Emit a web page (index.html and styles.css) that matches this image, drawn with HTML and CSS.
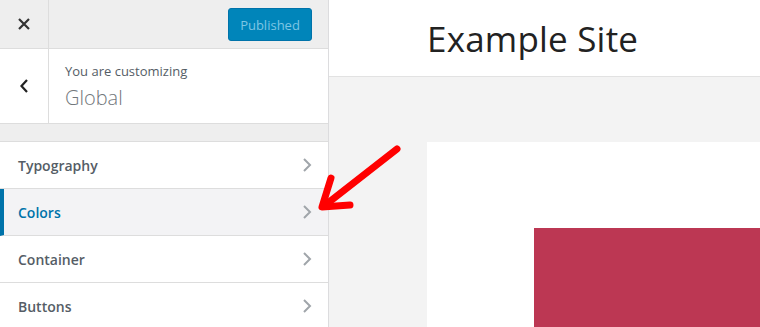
FILE: index.html
```html
<!DOCTYPE html>
<html>
<head>
<meta charset="utf-8">
<link rel="stylesheet" href="styles.css">
</head>
<body>
<div class="app">
  <aside class="sidebar">
    <div class="topbar">
      <div class="close">
        <svg width="14" height="14" viewBox="0 0 14 14"><path d="M2 2 L12 12 M12 2 L2 12" stroke="#333" stroke-width="2.2" fill="none"/></svg>
      </div>
      <div class="topbar-right">
        <button class="publish">Published</button>
      </div>
    </div>
    <div class="info">
      <div class="back">
        <svg width="10" height="16" viewBox="0 0 10 16"><path d="M8 2 L2.5 8 L8 14" stroke="#222" stroke-width="2.2" fill="none"/></svg>
      </div>
      <div class="info-text">
        <div class="info-small">You are customizing</div>
        <div class="info-title">Global</div>
      </div>
    </div>
    <div class="gap"></div>
    <ul class="menu">
      <li class="item"><span>Typography</span><svg class="chev" width="10" height="16" viewBox="0 0 10 16"><path d="M2 2 L8 8 L2 14" stroke="#a0a5aa" stroke-width="2" fill="none"/></svg></li>
      <li class="item active"><span>Colors</span><svg class="chev" width="10" height="16" viewBox="0 0 10 16"><path d="M2 2 L8 8 L2 14" stroke="#a0a5aa" stroke-width="2" fill="none"/></svg></li>
      <li class="item"><span>Container</span><svg class="chev" width="10" height="16" viewBox="0 0 10 16"><path d="M2 2 L8 8 L2 14" stroke="#a0a5aa" stroke-width="2" fill="none"/></svg></li>
      <li class="item"><span>Buttons</span><svg class="chev" width="10" height="16" viewBox="0 0 10 16"><path d="M2 2 L8 8 L2 14" stroke="#a0a5aa" stroke-width="2" fill="none"/></svg></li>
    </ul>
  </aside>
  <main class="preview">
    <header class="site-header">Example Site</header>
    <div class="site-body">
      <div class="content">
        <div class="block"></div>
      </div>
    </div>
  </main>
</div>
<svg class="arrow" width="760" height="327" viewBox="0 0 760 327">
  <g stroke="#ff0000" stroke-width="7" stroke-linecap="round" stroke-linejoin="round" fill="none">
    <path d="M397 149 L324 206"/>
    <path d="M331 178 L322 207 L350 205"/>
  </g>
</svg>
</body>
</html>
```
FILE: styles.css
```css
html, body {
  margin: 0;
  padding: 0;
  width: 760px;
  height: 327px;
  overflow: hidden;
  font-family: "Open Sans", "Noto Sans", sans-serif;
}
.app {
  display: flex;
  height: 327px;
  overflow: hidden;
}
.sidebar {
  width: 328px;
  flex: none;
  border-right: 1px solid #dcdcde;
  background: #eee;
  display: flex;
  flex-direction: column;
  overflow: hidden;
}
.sidebar > * {
  flex: none;
}
.topbar {
  height: 48px;
  display: flex;
  background: #eee;
  border-bottom: 1px solid #ddd;
}
.close {
  width: 48px;
  border-right: 1px solid #ddd;
  display: flex;
  align-items: center;
  justify-content: center;
}
.topbar-right {
  flex: 1;
  display: flex;
  justify-content: flex-end;
  align-items: center;
  padding-right: 16px;
}
.publish {
  width: 84px;
  height: 33px;
  margin-top: 1px;
  background: #0085ba;
  border: 1px solid #0073aa;
  border-radius: 3px;
  color: #7ec6e4;
  font-family: "Open Sans", sans-serif;
  font-size: 13px;
  padding: 0;
}
.info {
  height: 74px;
  display: flex;
  background: #fff;
  border-bottom: 1px solid #ddd;
}
.back {
  width: 48px;
  border-right: 1px solid #ddd;
  display: flex;
  align-items: center;
  justify-content: center;
}
.info-text {
  padding: 13px 0 0 16px;
}
.info-small {
  font-size: 13px;
  color: #555d66;
  line-height: 18px;
}
.info-title {
  font-size: 20px;
  font-weight: 300;
  color: #72777c;
  line-height: 26px;
  margin-top: 5px;
}
.gap {
  height: 17px;
  background: #eee;
  border-bottom: 1px solid #ddd;
}
.menu {
  list-style: none;
  margin: 0;
  padding: 0;
  background: #fff;
}
.item {
  box-sizing: border-box;
  height: 47px;
  border-bottom: 1px solid #ddd;
  display: flex;
  align-items: center;
  justify-content: space-between;
  padding: 0 16px 0 18px;
  font-size: 14px;
  font-weight: 600;
  color: #555d66;
  background: #fff;
}
.item.active {
  background: #f3f3f5;
  color: #0073aa;
  border-left: 4px solid #0073aa;
  padding-left: 14px;
}
.chev {
  display: block;
}
.preview {
  flex: 1;
  display: flex;
  flex-direction: column;
  background: #f3f3f3;
  overflow: hidden;
}
.site-header {
  flex: none;
  height: 76px;
  background: #fff;
  border-bottom: 1px solid #e2e2e2;
  font-size: 35px;
  font-weight: 400;
  color: #222;
  padding-left: 98px;
  line-height: 78px;
  letter-spacing: 0.2px;
}
.site-body {
  flex: 1;
  padding: 65px 0 0 98px;
}
.content {
  background: #fff;
  height: 185px;
  box-sizing: border-box;
  padding: 86px 0 0 107px;
}
.block {
  background: #bc3753;
  height: 99px;
}
.arrow {
  position: absolute;
  left: 0;
  top: 0;
  pointer-events: none;
}
```
